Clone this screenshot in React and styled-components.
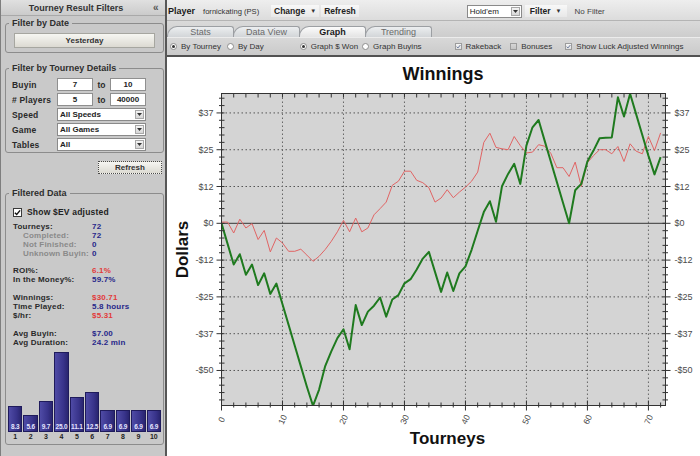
import React from 'react';
import styled, { createGlobalStyle } from 'styled-components';

const RED = '#e23a3a';
const NAVY = '#27278a';

const GlobalStyle = createGlobalStyle`
  html, body {
    margin: 0;
    padding: 0;
  }
  body {
    width: 700px;
    height: 456px;
    overflow: hidden;
    background: #c9c9c9;
    font-family: 'Liberation Sans', Arial, sans-serif;
    color: #222;
  }
  * {
    box-sizing: border-box;
  }
`;

const Screen = styled.div`
  display: flex;
  width: 700px;
  height: 456px;
`;

/* ---------- left filter panel ---------- */

const Sidebar = styled.aside`
  flex: none;
  width: 167px;
  height: 456px;
  display: flex;
  flex-direction: column;
  background: #c9c9c9;
  border-left: 1px solid #7e7e7e;
  border-right: 2px solid #575757;
`;

const PanelTitle = styled.div`
  flex: none;
  height: 16px;
  display: flex;
  align-items: center;
  background: linear-gradient(#e0e0e0, #cbcbcb);
  border-bottom: 1px solid #a9a9a9;

  h1 {
    flex: 1;
    margin: 0;
    text-align: center;
    font-size: 9px;
    font-weight: bold;
    color: #333;
  }
`;

const Collapse = styled.span`
  width: 14px;
  padding-left: 2px;
  font-size: 10px;
  font-weight: bold;
  color: #555;
`;

const Group = styled.fieldset`
  flex: none;
  margin: ${p => p.$top}px 1px 0 4px;
  padding: 0 2px;
  border: 1px solid #8c8c8c;
  border-radius: 3px;
  min-width: 0;
`;

const GroupTitle = styled.legend`
  margin-left: 1px;
  padding: 0 3px;
  font-size: 9px;
  font-weight: bold;
  line-height: 10px;
  color: #2e2e2e;
`;

const DateButton = styled.button`
  display: block;
  width: calc(100% - 12px);
  height: 15px;
  margin: 5px 6px 4px;
  padding: 0;
  border: 1px solid #a6a6a0;
  background: linear-gradient(#f6f6f2, #dcdad2);
  font-family: inherit;
  font-size: 8px;
  font-weight: bold;
  color: #333;
`;

const FieldGrid = styled.div`
  display: grid;
  grid-template-columns: 45px 36px 17px 36px;
  grid-auto-rows: 13px;
  row-gap: 2px;
  align-items: center;
  margin: 5px 0 1px 4px;
`;

const FieldLabel = styled.span`
  font-size: 8.5px;
  font-weight: bold;
  letter-spacing: 0.2px;
  color: #2a2a2a;
  white-space: nowrap;
`;

const NumberBox = styled.input`
  width: 36px;
  height: 13px;
  padding: 0;
  border: 1px solid #8f8f8f;
  background: #fff;
  text-align: center;
  font-family: inherit;
  font-size: 8px;
  font-weight: bold;
  color: #222;
  outline: none;
`;

const ToWord = styled.span`
  text-align: center;
  font-size: 8.5px;
  font-weight: bold;
  color: #2a2a2a;
`;

const SelectBox = styled.div`
  grid-column: 2 / 5;
  height: 13px;
  display: flex;
  align-items: center;
  padding-left: 2px;
  border: 1px solid #8a8a8a;
  background: #fff;
  font-size: 8px;
  font-weight: bold;
  color: #222;
`;

const DropArrow = styled.span`
  margin-left: auto;
  margin-right: 1px;
  width: 9px;
  height: 9px;
  display: flex;
  align-items: center;
  justify-content: center;
  border: 1px solid #a8a8a8;
  background: linear-gradient(#f4f4f4, #d6d6d6);
`;

const RefreshRow = styled.div`
  flex: none;
  display: flex;
  justify-content: flex-end;
  margin: 8px 3px 0 0;
`;

const RefreshButton = styled.button`
  width: 64px;
  height: 13px;
  padding: 0;
  border: 1px dotted #4a4a4a;
  background: linear-gradient(#f6f6f2, #dcdad2);
  font-family: inherit;
  font-size: 8px;
  font-weight: bold;
  color: #333;
`;

const CheckRow = styled.label`
  display: flex;
  align-items: center;
  gap: 5px;
  height: 10px;
  margin: 9px 0 0 5px;
  font-size: 8.5px;
  font-weight: bold;
  letter-spacing: 0.2px;
  color: #222;
`;

const CheckSquare = styled.span`
  width: 9px;
  height: 9px;
  display: flex;
  align-items: center;
  justify-content: center;
  border: 1px solid #3a3a3a;
  background: #fff;
`;

const StatList = styled.div`
  margin: 6px 0 0 5px;
`;

const StatRow = styled.div`
  display: grid;
  grid-template-columns: 79px 1fr;
  height: 8.9px;
  line-height: 8.9px;
  font-size: 8px;
  font-weight: bold;
  letter-spacing: 0.2px;
  white-space: nowrap;
`;

const StatGap = styled.div`
  height: 8.9px;
`;

const StatLabel = styled.span`
  padding-left: ${p => (p.$sub ? 10 : 0)}px;
  color: ${p => (p.$sub ? '#8a8a8a' : '#2a2a2a')};
`;

const StatValue = styled.span`
  color: ${p => (p.$tone === 'red' ? RED : NAVY)};
`;

const BarChart = styled.div`
  display: flex;
  gap: 1px;
  margin: 3px 0 3px;
`;

const BarColumn = styled.div`
  flex: 1;
  min-width: 0;
  display: flex;
  flex-direction: column;
`;

const BarSlot = styled.div`
  height: 82px;
  display: flex;
  align-items: flex-end;
`;

const Bar = styled.div`
  width: 100%;
  display: flex;
  align-items: flex-end;
  justify-content: center;
  padding-bottom: 1px;
  border: 1px solid #1f1b5c;
  background: linear-gradient(90deg, #4f4ba6, #38338a 65%, #29256f);
  font-size: 6.5px;
  font-weight: bold;
  letter-spacing: -0.2px;
  line-height: 7px;
  color: #e4e4ff;
`;

const BarIndex = styled.div`
  height: 9px;
  line-height: 9px;
  text-align: center;
  font-size: 7px;
  font-weight: bold;
  color: #222;
`;

/* ---------- right side ---------- */

const Main = styled.main`
  flex: 1;
  min-width: 0;
  display: flex;
  flex-direction: column;
`;

const Toolbar = styled.div`
  flex: none;
  height: 21px;
  display: flex;
  align-items: center;
  padding: 2px 0 0 1px;
  background: linear-gradient(#eeeeee, #dcdcdc);
  border-bottom: 1px solid #b4b4b4;
`;

const PlayerLabel = styled.span`
  font-size: 9px;
  font-weight: bold;
  color: #1a1a1a;
`;

const PlayerName = styled.span`
  width: 60px;
  margin-left: 8px;
  font-size: 7.6px;
  color: #333;
  white-space: nowrap;
`;

const ToolButton = styled.span`
  height: 12px;
  display: flex;
  align-items: center;
  margin-left: ${p => p.$space}px;
  padding: 0 ${p => p.$pad}px;
  background: linear-gradient(#f8f8f8, #e8e8e8);
  font-size: 8.5px;
  font-weight: bold;
  color: #222;
`;

const Caret = styled.span`
  margin-left: 5px;
  font-size: 6px;
  color: #333;
`;

const GameSelect = styled.div`
  width: 55px;
  height: 13px;
  display: flex;
  align-items: center;
  margin-left: 108px;
  padding-left: 2px;
  border: 1px solid #8a8a8a;
  background: #fff;
  font-size: 8px;
  color: #222;
`;

const FilterNote = styled.span`
  margin-left: 8px;
  font-size: 8px;
  color: #444;
`;

const TabStrip = styled.div`
  flex: none;
  height: 17px;
  display: flex;
  align-items: flex-end;
  background: linear-gradient(#dadada, #cdcdcd);
  border-bottom: 1px solid #ececec;
`;

const Tab = styled.div`
  width: 67px;
  height: 11px;
  margin-right: -1px;
  display: flex;
  align-items: center;
  justify-content: center;
  border: 1px solid #9c9fa3;
  border-bottom: none;
  border-radius: 10px 3px 0 0;
  background: ${p => (p.$active ? 'linear-gradient(#fbfbfb, #e4e4e4)' : 'linear-gradient(#eceef0, #d2d5d8)')};
  color: ${p => (p.$active ? '#1a1a1a' : '#6a6a6a')};
  font-size: 9px;
  font-weight: ${p => (p.$active ? 'bold' : 'normal')};
`;

const OptionBar = styled.div`
  flex: none;
  height: 19px;
  display: flex;
  align-items: center;
  background: linear-gradient(#d8d8d8, #cacaca);
  border-bottom: 2px solid #525252;
`;

const Option = styled.label`
  display: flex;
  align-items: center;
  gap: 4px;
  margin-left: ${p => p.$space}px;
  font-size: 8px;
  color: #333;
  white-space: nowrap;
`;

const RadioDot = styled.span`
  width: 7px;
  height: 7px;
  display: flex;
  align-items: center;
  justify-content: center;
  border: 1px solid #8d8d8d;
  border-radius: 50%;
  background: #fff;

  &::after {
    content: '';
    width: 3px;
    height: 3px;
    border-radius: 50%;
    background: ${p => (p.$on ? '#333' : 'transparent')};
  }
`;

const TickBox = styled.span`
  width: 7px;
  height: 7px;
  display: flex;
  align-items: center;
  justify-content: center;
  border: 1px solid #9c9c9c;
  background: ${p => (p.$on ? 'linear-gradient(#f6f6f6, #dedede)' : 'linear-gradient(#d6d6d6, #c4c4c4)')};
`;

const ChartArea = styled.div`
  flex: 1;
  min-height: 0;
  background: #fff;

  svg {
    display: block;
  }
`;

/* ---------- data ---------- */

const stats = [
  { label: 'Tourneys:', value: '72' },
  { label: 'Completed:', value: '72', sub: true },
  { label: 'Not Finished:', value: '0', sub: true },
  { label: 'Unknown Buyin:', value: '0', sub: true },
  null,
  { label: 'ROI%:', value: '6.1%', tone: 'red' },
  { label: 'In the Money%:', value: '59.7%' },
  null,
  { label: 'Winnings:', value: '$30.71', tone: 'red' },
  { label: 'Time Played:', value: '5.8 hours' },
  { label: '$/hr:', value: '$5.31', tone: 'red' },
  null,
  { label: 'Avg Buyin:', value: '$7.00' },
  { label: 'Avg Duration:', value: '24.2 min' }
];

const finishes = [8.3, 5.6, 9.7, 25.0, 11.1, 12.5, 6.9, 6.9, 6.9, 6.9];

const won = [
  0, -7, -14, -10.5, -17.5, -14, -21, -17, -24, -20.5, -27.5,
  -34.5, -41.5, -48.5, -55.5, -62, -56.5, -48.5, -43.5, -39, -36,
  -42.8, -27.8, -34.6, -30, -28, -25.2, -31.7, -25.9, -24.4, -20.4,
  -19, -15.7, -12, -9.7, -16.5, -23.3, -16.7, -23, -17, -14.6,
  -9, -2.5, 3.8, 7.5, 0.5, 12.6, 16.8, 20.2, 13.4, 26.4,
  32.6, 35.1, 28, 21, 14, 7, 0, 11.2, 13.4, 21,
  24.7, 28.9, 29.1, 29.2, 42.8, 36.3, 44, 37, 30, 23,
  16.6, 22.5
];

const luck = [
  0.4, 0.4, -3.3, 1.4, -1.6, -0.1, -5.5, -2.4, -9.7, -5, -6.7,
  -9.5, -9.5, -8.8, -10.8, -12.9, -11.2, -8.9, -6.1, -2.9, 1,
  -2.9, 1.8, -2.9, -1.6, 2.9, 5, 7.2, 12.9, 14.3, 17.7,
  17.7, 14.6, 13.8, 12.1, 7.2, 8.6, 11.4, 8.7, 10.6, 12.3,
  14.3, 17.4, 27.5, 30.6, 25.8, 25.3, 25, 29.5, 26.4, 23.9,
  24.2, 26.7, 26.2, 23.8, 18.9, 18.9, 15.9, 20.8, 12.5, 20.6,
  23, 25, 25, 23.6, 26.1, 21, 27, 24.5, 23.6, 29.5,
  24.7, 30.7
];

/* ---------- chart ---------- */

const W = 533;
const H = 399;
const PL = 54.5;
const PT = 36.5;
const PR = 498.5;
const PB = 348.5;
const XMAX = 72.8;
const YMAX = 44.1;
const YMIN = -61.9;

const sx = i => PL + (i / XMAX) * (PR - PL);
const sy = v => PT + ((YMAX - v) / (YMAX - YMIN)) * (PB - PT);

const linePath = data => data
  .map((v, i) => `${i ? 'L' : 'M'}${sx(i).toFixed(1)},${sy(v).toFixed(1)}`)
  .join(' ');

const range = (from, to, step) => {
  const out = [];
  for (let v = from; v <= to + 0.001; v += step) out.push(v);
  return out;
};

const yLabels = [
  [37.5, '$37'], [25, '$25'], [12.5, '$12'], [0, '$0'],
  [-12.5, '-$12'], [-25, '-$25'], [-37.5, '-$37'], [-50, '-$50']
];

const WinningsChart = () => {
  const yTicks = range(-60, 42.5, 2.5);
  const xTicks = range(0, 72, 2);
  const xMajor = range(0, 70, 10);
  const axis = '#333';

  return (
    <svg width={W} height={H} viewBox={`0 0 ${W} ${H}`}>
      <defs>
        <clipPath id="plot-clip">
          <rect x={PL} y={PT} width={PR - PL} height={PB - PT} />
        </clipPath>
      </defs>

      <text x={276} y={23} textAnchor="middle" fontSize="18" fontWeight="bold" fill="#111">
        Winnings
      </text>

      <rect x={PL} y={PT} width={PR - PL} height={PB - PT} fill="#d4d4d4" />

      {yLabels.filter(([v]) => v !== 0).map(([v]) => (
        <line key={`h${v}`} x1={PL} x2={PR} y1={sy(v)} y2={sy(v)} stroke="#555" strokeDasharray="1.5 2.5" />
      ))}
      {xMajor.filter(i => i > 0).map(i => (
        <line key={`v${i}`} x1={sx(i)} x2={sx(i)} y1={PT} y2={PB} stroke="#666" strokeDasharray="1.5 2.5" />
      ))}
      <line x1={PL} x2={PR} y1={sy(0)} y2={sy(0)} stroke="#555" strokeWidth="1.2" />

      <g clipPath="url(#plot-clip)" fill="none" strokeLinejoin="round">
        <path d={linePath(luck)} stroke="#e06464" strokeWidth="1" />
        <path d={linePath(won)} stroke="#1f7a1f" strokeWidth="2" />
      </g>

      <rect x={PL} y={PT} width={PR - PL} height={PB - PT} fill="none" stroke={axis} strokeWidth="1" />

      {yTicks.map(v => {
        const major = Math.abs(v % 12.5) < 0.01;
        const y = sy(v);
        return (
          <g key={`yt${v}`} stroke={axis}>
            <line x1={PL - (major ? 5 : 2.5)} x2={PL + 3} y1={y} y2={y} />
            <line x1={PR - 3} x2={PR + (major ? 5 : 2.5)} y1={y} y2={y} />
          </g>
        );
      })}
      {xTicks.map(i => {
        const major = i % 10 === 0;
        const x = sx(i);
        return (
          <g key={`xt${i}`} stroke={axis}>
            <line x1={x} x2={x} y1={PB - (major ? 5 : 3)} y2={PB + (major ? 5 : 2)} />
            <line x1={x} x2={x} y1={PT} y2={PT + 4} />
          </g>
        );
      })}

      <g fontSize="9" fill="#4a4a4a">
        {yLabels.map(([v, t]) => (
          <text key={`yl${v}`} x={PL - 8} y={sy(v)} textAnchor="end" dominantBaseline="central">{t}</text>
        ))}
        {yLabels.map(([v, t]) => (
          <text key={`yr${v}`} x={PR + 9} y={sy(v)} dominantBaseline="central">{t}</text>
        ))}
        {xMajor.map(i => (
          <text
            key={`xl${i}`}
            x={sx(i)}
            y={362.5}
            fontSize="8.5"
            textAnchor="middle"
            dominantBaseline="central"
            transform={`rotate(-65 ${sx(i)} 362.5)`}
          >
            {i}
          </text>
        ))}
      </g>

      <text
        x={15}
        y={(PT + PB) / 2}
        textAnchor="middle"
        dominantBaseline="central"
        fontSize="17"
        fontWeight="bold"
        fill="#111"
        transform={`rotate(-90 15 ${(PT + PB) / 2})`}
      >
        Dollars
      </text>
      <text x={(PL + PR) / 2 + 4} y={387} textAnchor="middle" fontSize="17" fontWeight="bold" fill="#111">
        Tourneys
      </text>
    </svg>
  );
};

/* ---------- small drawings ---------- */

const DownTriangle = () => (
  <svg width="5" height="3" viewBox="0 0 5 3">
    <path d="M0 0 L5 0 L2.5 3 Z" fill="#333" />
  </svg>
);

const CheckMark = ({ color, size }) => (
  <svg width={size} height={size} viewBox="0 0 8 8">
    <path d="M1 4.2 L3.1 6.3 L7 1.6" fill="none" stroke={color} strokeWidth="1.6" />
  </svg>
);

/* ---------- page ---------- */

const FilterPanel = () => (
  <Sidebar>
    <PanelTitle>
      <h1>Tourney Result Filters</h1>
      <Collapse>«</Collapse>
    </PanelTitle>

    <Group $top={2}>
      <GroupTitle>Filter by Date</GroupTitle>
      <DateButton>Yesterday</DateButton>
    </Group>

    <Group $top={10}>
      <GroupTitle>Filter by Tourney Details</GroupTitle>
      <FieldGrid>
        <FieldLabel>Buyin</FieldLabel>
        <NumberBox readOnly value="7" />
        <ToWord>to</ToWord>
        <NumberBox readOnly value="10" />

        <FieldLabel># Players</FieldLabel>
        <NumberBox readOnly value="5" />
        <ToWord>to</ToWord>
        <NumberBox readOnly value="40000" />

        <FieldLabel>Speed</FieldLabel>
        <SelectBox>All Speeds<DropArrow><DownTriangle /></DropArrow></SelectBox>

        <FieldLabel>Game</FieldLabel>
        <SelectBox>All Games<DropArrow><DownTriangle /></DropArrow></SelectBox>

        <FieldLabel>Tables</FieldLabel>
        <SelectBox>All<DropArrow><DownTriangle /></DropArrow></SelectBox>
      </FieldGrid>
    </Group>

    <RefreshRow>
      <RefreshButton>Refresh</RefreshButton>
    </RefreshRow>

    <Group $top={14}>
      <GroupTitle>Filtered Data</GroupTitle>
      <CheckRow>
        <CheckSquare><CheckMark color="#111" size={7} /></CheckSquare>
        Show $EV adjusted
      </CheckRow>

      <StatList>
        {stats.map((s, i) => (s ? (
          <StatRow key={s.label}>
            <StatLabel $sub={s.sub}>{s.label}</StatLabel>
            <StatValue $tone={s.tone}>{s.value}</StatValue>
          </StatRow>
        ) : <StatGap key={`gap${i}`} />))}
      </StatList>

      <BarChart>
        {finishes.map((v, i) => (
          <BarColumn key={i}>
            <BarSlot>
              <Bar style={{ height: `${v * 3.2}px` }}>{v.toFixed(1)}</Bar>
            </BarSlot>
            <BarIndex>{i + 1}</BarIndex>
          </BarColumn>
        ))}
      </BarChart>
    </Group>
  </Sidebar>
);

const App = () => (
  <>
    <GlobalStyle />
    <Screen>
      <FilterPanel />
      <Main>
        <Toolbar>
          <PlayerLabel>Player</PlayerLabel>
          <PlayerName>fornickating (PS)</PlayerName>
          <ToolButton $space={8} $pad={3}>Change<Caret>▼</Caret></ToolButton>
          <ToolButton $space={2} $pad={3}>Refresh</ToolButton>
          <GameSelect>Hold'em<DropArrow><DownTriangle /></DropArrow></GameSelect>
          <ToolButton $space={3} $pad={5}>Filter<Caret>▼</Caret></ToolButton>
          <FilterNote>No Filter</FilterNote>
        </Toolbar>

        <TabStrip>
          <Tab>Stats</Tab>
          <Tab>Data View</Tab>
          <Tab $active>Graph</Tab>
          <Tab>Trending</Tab>
        </TabStrip>

        <OptionBar>
          <Option $space={3}><RadioDot $on />By Tourney</Option>
          <Option $space={6}><RadioDot />By Day</Option>
          <Option $space={36}><RadioDot $on />Graph $ Won</Option>
          <Option $space={4}><RadioDot />Graph Buyins</Option>
          <Option $space={33}><TickBox $on><CheckMark color="#6b7a9c" size={5} /></TickBox>Rakeback</Option>
          <Option $space={9}><TickBox />Bonuses</Option>
          <Option $space={13}><TickBox $on><CheckMark color="#6b7a9c" size={5} /></TickBox>Show Luck Adjusted Winnings</Option>
        </OptionBar>

        <ChartArea>
          <WinningsChart />
        </ChartArea>
      </Main>
    </Screen>
  </>
);

export default App;
